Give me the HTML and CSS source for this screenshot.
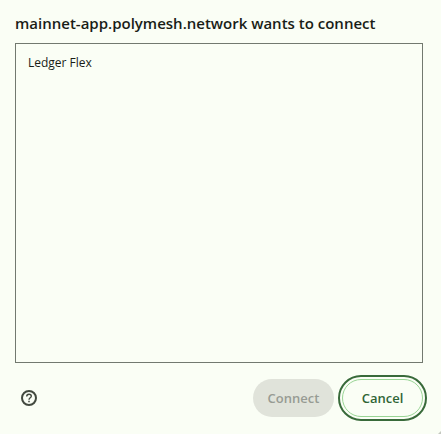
FILE: index.html
```html
<!DOCTYPE html>
<html lang="en">
<head>
<meta charset="utf-8">
<title>Connect a device</title>
<link rel="stylesheet" href="styles.css">
</head>
<body>
<main class="dialog">
  <h1 class="title">mainnet-app.polymesh.network wants to connect</h1>
  <ul class="devices">
    <li class="device">Ledger Flex</li>
  </ul>
  <footer class="actions">
    <button class="help" type="button" aria-label="Help">
      <svg viewBox="0 0 16 16" width="16" height="16" fill="none" stroke="currentColor">
        <circle cx="8" cy="8" r="7" stroke-width="2"/>
        <path d="M5.700 6.500C5.700 5.100 6.700 4.200 8 4.200s2.300.8 2.300 2.100C10.300 7.700 8 8 8 9.700" stroke-width="1.400"/>
        <path d="M8 10.800v1.500" stroke-width="1.500"/>
      </svg>
    </button>
    <button class="button" type="button" disabled>Connect</button>
    <button class="button button-focused" type="button">Cancel</button>
  </footer>
</main>
<svg class="grip" viewBox="0 0 3 3" width="3" height="3" aria-hidden="true"><path d="M3 0v3H0z" fill="#c4c8c0"/></svg>
</body>
</html>
```
FILE: styles.css
```css
* {
  box-sizing: border-box;
}

body {
  margin: 0;
  background: #fafef5;
  color: #191d17;
  font-family: "Segoe UI", "Open Sans", "Noto Sans", sans-serif;
  font-size: 12px;
}

.dialog {
  display: flex;
  flex-direction: column;
  min-height: 100vh;
  padding: 13px 18px 17px 15px;
}

.title {
  margin: 0 0 10px;
  font-size: 15px;
  line-height: 20px;
  font-weight: 600;
}

.devices {
  flex: 1;
  margin: 0;
  padding: 8px 0;
  border: 1px solid #72796f;
  list-style: none;
}

.device {
  padding: 0 12px;
  line-height: 22px;
}

.actions {
  display: flex;
  align-items: center;
  gap: 8px;
  padding-top: 16px;
}

.help {
  display: flex;
  margin-right: auto;
  padding: 6px;
  border: 0;
  background: none;
  color: #42493f;
}

.button {
  height: 38px;
  min-width: 81px;
  padding: 0 12px;
  border: 1px solid transparent;
  border-radius: 19px;
  background: transparent;
  color: #2f6535;
  font: inherit;
  font-size: 13px;
  font-weight: 600;
}

.button:disabled {
  background: #e0e3da;
  color: #979b93;
}

.button-focused {
  border-color: #99d595;
  outline: 2px solid #386a3a;
  outline-offset: 2px;
}

.grip {
  position: fixed;
  right: 0;
  bottom: 0;
}
```
